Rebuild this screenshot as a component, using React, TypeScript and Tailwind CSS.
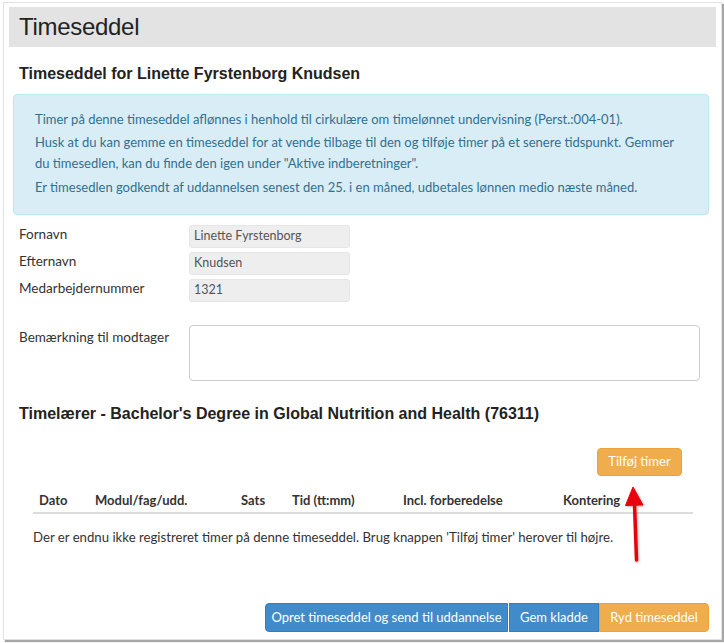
const body = { fontFamily: 'Lato, "Noto Sans", sans-serif' };
const head = { fontFamily: '"Liberation Sans", Arial, sans-serif' };

function ReadOnlyField({ label, value }: { label: string; value: string }) {
  return (
    <div className="flex items-center h-[23px] mb-[4px]">
      <div className="w-[176px] pl-[6px] text-[13.5px] text-[#333] -mt-[4px]">{label}</div>
      <div className="w-[161px] h-[23px] bg-[#eeeeee] rounded-[3px] border border-[#e6e6e6] px-[4px] flex items-center text-[12.5px] text-[#555]">
        {value}
      </div>
    </div>
  );
}

export default function App() {
  return (
    <div className="w-[724px] h-[643px] bg-white relative overflow-hidden" style={body}>
      <div className="absolute left-[3px] top-[2px] w-[719px] h-[638px] bg-white border border-[#e2e2e2] shadow-[2px_2px_1px_rgba(0,0,0,0.35)] px-[5px] pt-[4px]">
        {/* page header */}
        <div className="h-[40px] bg-[#e3e3e3] flex items-center pl-[10px]">
          <h1 className="text-[24px] text-[#222] tracking-[-0.3px]" style={head}>Timeseddel</h1>
        </div>

        <div className="pl-[4px] pr-[3px]">
          <h2 className="mt-[15px] pl-[6px] text-[16px] font-bold text-[#222]" style={head}>
            Timeseddel for Linette Fyrstenborg Knudsen
          </h2>

          <div className="mt-[8px] w-[696px] h-[121px] bg-[#d9edf7] border border-[#bce8f1] rounded-[4px] pl-[21px] pr-[25px] pt-[14px] text-[13px] leading-[21px] text-[#31708f]">
            <p className="mb-[2px]">Timer på denne timeseddel aflønnes i henhold til cirkulære om timelønnet undervisning (Perst.:004-01).</p>
            <p className="mb-[3px]">Husk at du kan gemme en timeseddel for at vende tilbage til den og tilføje timer på et senere tidspunkt. Gemmer du timesedlen, kan du finde den igen under "Aktive indberetninger".</p>
            <p>Er timesedlen godkendt af uddannelsen senest den 25. i en måned, udbetales lønnen medio næste måned.</p>
          </div>

          <div className="mt-[10px]">
            <ReadOnlyField label="Fornavn" value="Linette Fyrstenborg" />
            <ReadOnlyField label="Efternavn" value="Knudsen" />
            <ReadOnlyField label="Medarbejdernummer" value="1321" />
          </div>

          <div className="flex mt-[23px]">
            <div className="w-[176px] pl-[6px] pt-[2px] text-[13.5px] text-[#333]">Bemærkning til modtager</div>
            <div className="w-[511px] h-[56px] border border-[#cccccc] rounded-[4px] bg-white" />
          </div>

          <h2 className="mt-[21px] pl-[6px] text-[16px] font-bold text-[#222]" style={head}>
            Timelærer - Bachelor's Degree in Global Nutrition and Health (76311)
          </h2>

          <div className="flex justify-end mt-[22px] pr-[31px]">
            <button className="h-[28px] w-[85px] bg-[#f0ad4e] border border-[#eea236] rounded-[4px] text-white text-[13px]">
              Tilføj timer
            </button>
          </div>

          <div className="mx-[20px] mt-[7px] border-b-2 border-[#dddddd] h-[31px] pt-[6px] flex items-center text-[13px] font-bold text-[#333]">
            <div className="w-[62px] pl-[6px]">Dato</div>
            <div className="w-[146px]">Modul/fag/udd.</div>
            <div className="w-[51px]">Sats</div>
            <div className="w-[111px]">Tid (tt:mm)</div>
            <div className="w-[160px]">Incl. forberedelse</div>
            <div>Kontering</div>
          </div>

          <p className="mx-[20px] mt-[14px] text-[13.2px] text-[#333]">
            Der er endnu ikke registreret timer på denne timeseddel. Brug knappen 'Tilføj timer' herover til højre.
          </p>

          <div className="flex justify-end mt-[55px] pr-[4px] text-[13px] text-white">
            <button className="h-[29px] w-[243px] bg-[#428bca] border border-[#357ebd] rounded-l-[4px]">Opret timeseddel og send til uddannelse</button>
            <button className="h-[29px] w-[90px] bg-[#428bca] border border-[#357ebd] ml-[1px]">Gem kladde</button>
            <button className="h-[29px] w-[110px] bg-[#f0ad4e] border border-[#eea236] rounded-r-[4px]">Ryd timeseddel</button>
          </div>
        </div>
      </div>

      {/* red annotation arrow */}
      <svg className="absolute left-[620px] top-[480px]" width="32" height="90" viewBox="0 0 32 90">
        <defs>
          <filter id="sh" x="-50%" y="-20%" width="200%" height="140%">
            <feDropShadow dx="1" dy="1" stdDeviation="1" floodColor="#000" floodOpacity="0.3" />
          </filter>
        </defs>
        <g filter="url(#sh)">
          <path d="M14.5 24 L16.5 80" stroke="#e8000b" strokeWidth="3.5" strokeLinecap="round" />
          <path d="M13 7 L5.5 25.5 L23 25 Z" fill="#e8000b" stroke="#e8000b" strokeWidth="1" strokeLinejoin="round" />
        </g>
      </svg>
    </div>
  );
}
